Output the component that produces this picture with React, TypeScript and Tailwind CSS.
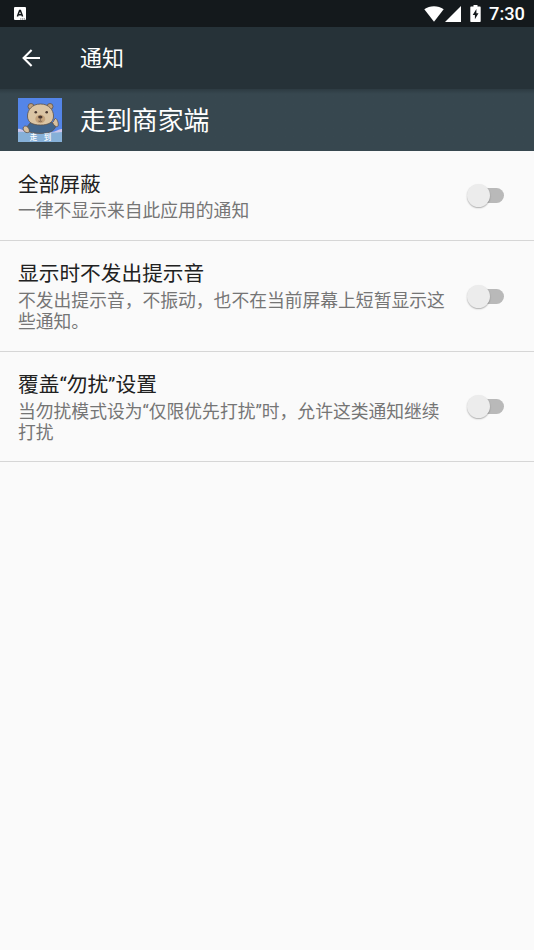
import { useState } from "react";

interface Setting {
  id: string;
  title: string;
  summary: string[];
}

const SETTINGS: Setting[] = [
  { id: "block", title: "全部屏蔽", summary: ["一律不显示来自此应用的通知"] },
  {
    id: "silent",
    title: "显示时不发出提示音",
    summary: ["不发出提示音，不振动，也不在当前屏幕上短暂显示这", "些通知。"],
  },
  {
    id: "override",
    title: "覆盖“勿扰”设置",
    summary: ["当勿扰模式设为“仅限优先打扰”时，允许这类通知继续", "打扰"],
  },
];

export default function App() {
  return (
    <div className="flex min-h-screen flex-col bg-[#fafafa] font-[Roboto,'Noto_Sans_CJK_SC',sans-serif]">
      <StatusBar />
      <header className="flex h-[62px] items-center bg-[#263238] text-white">
        <button aria-label="返回" className="ml-[19px] h-6 w-6">
          <svg viewBox="0 0 24 24" className="h-6 w-6" fill="none" stroke="currentColor" strokeWidth="2.1">
            <path d="M21 12H4.5M12.6 4 4.6 12l8 8" />
          </svg>
        </button>
        <h1 className="ml-[37px] pt-0.5 text-[22px] leading-[30px]">通知</h1>
      </header>
      <div className="flex h-[62px] items-center bg-[#37474f] bg-linear-to-b from-[#2d3b42] from-0% to-[#37474f] to-[5px] pl-[18px] text-white">
        <AppIcon />
        <h2 className="ml-[18px] pt-0.5 text-[25.9px] leading-[36px]">走到商家端</h2>
      </div>
      <main>
        {SETTINGS.map((setting) => (
          <SettingRow key={setting.id} setting={setting} />
        ))}
      </main>
    </div>
  );
}

function StatusBar() {
  return (
    <div className="flex h-[27px] items-center justify-between bg-[#14191c] pr-[9px] pl-[14px] text-white">
      <div className="h-[13px] w-3 rounded-[1px] bg-white">
        <svg viewBox="0 0 12 13" className="h-[13px] w-3">
          <path d="M3.4 9.6 5.6 3.6h.8l2.2 6M4.4 7.7h3.2" fill="none" stroke="#14191c" strokeWidth="1.5" />
          <path d="M6.2 12h1.2m.6 0h1.2m.6 0H11" stroke="#14191c" strokeWidth=".7" />
        </svg>
      </div>
      <div className="flex items-center">
        <svg viewBox="0 0 20 16" className="h-4 w-5" fill="currentColor">
          <path d="M.3 3.2C5.7-.7 14.3-.7 19.7 3.2L10 15.8z" />
        </svg>
        <svg viewBox="0 0 16 16" className="ml-[1px] h-4 w-4" fill="currentColor">
          <path d="M16 0v16H0z" />
        </svg>
        <svg viewBox="0 0 11 17" className="ml-[9px] h-[17px] w-[11px]" fill="currentColor">
          <path fillRule="evenodd" d="M3.5 0h4v1.6H10q.7 0 .7.8v13.8q0 .8-.7.8H1q-.7 0-.7-.8V2.4q0-.8.7-.8h2.5zM6.4 4 2.7 10h2.2v4.3L8.5 8.3H6.4z" />
        </svg>
        <span className="ml-2 text-[18.3px] leading-[26px] font-medium">7:30</span>
      </div>
    </div>
  );
}

function AppIcon() {
  return (
    <svg viewBox="0 0 44 44" className="h-11 w-11">
      <path fill="#5485e8" d="M0 0h44v44H0z" />
      <path fill="#cfc6ea" d="M0 31c3-1 5 2 9 3h25c4 0 6-3 10-3v13H0z" />
      <path fill="#86b0d8" d="M0 34c9-1 16 2 24 1s13 0 20-1v10H0z" />
      <g stroke="#5c5047" strokeWidth=".8">
        <path fill="#416489" d="M9 33c-1-5 3-9 8-10h14c3 1 5 4 7 4 0 3-3 6-6 7-5 2-17 2-23-1z" />
        <path fill="#d8c1a0" d="M10.5 34.5C7 35.5 4 31.5 5.5 29c1.5-2 4.5-.5 5.500 2 .6 1.5.5 3-.5 3.500zM34.5 24.500c1.5-.5 1.5-4 3-4s3.5 5 2.500 7.500c-1 2-4 0-5.500-3.500z" />
        <circle cx="13" cy="8.5" r="3" fill="#c2a17c" />
        <circle cx="32" cy="8.5" r="3" fill="#c2a17c" />
        <path fill="#dbc5a4" d="M22.5 6C14 6 9.5 12 9.5 18c0 6.5 5 9 13 9s13-2.5 13-9c0-6-4.5-12-13-12z" />
      </g>
      <ellipse cx="22.3" cy="21" rx="5" ry="4.2" fill="#c6a57e" />
      <ellipse cx="22.3" cy="19" rx="2.2" ry="1.6" fill="#49372f" />
      <path d="M22.3 20v3m-2 0q2 1.5 4 0" fill="none" stroke="#6a5140" strokeWidth=".7" />
      <circle cx="17.8" cy="14.2" r="1.3" fill="#49372f" />
      <circle cx="28.7" cy="14.2" r="1.3" fill="#49372f" />
      <text x="11.8" y="41.8" fontSize="7.5" fontWeight="500" fill="#fff">走</text>
      <text x="25.8" y="41.8" fontSize="7.5" fontWeight="500" fill="#fff">到</text>
    </svg>
  );
}

function SettingRow({ setting }: { setting: Setting }) {
  const [on, setOn] = useState(false);

  return (
    <section className="flex items-center justify-between border-b border-[#d6d6d6] pr-[30px] pl-[18px]">
      <div className="pt-[20.6px] pb-[18.6px] whitespace-nowrap">
        <h3 className="text-[20.7px] leading-[27px] text-[#212121]">{setting.title}</h3>
        <p className="mt-[1.6px] text-[17.8px] leading-[21px] text-[#757575]">
          {setting.summary.map((line) => (
            <span key={line} className="block">{line}</span>
          ))}
        </p>
      </div>
      <Toggle label={setting.title} on={on} onToggle={() => setOn(!on)} />
    </section>
  );
}

function Toggle({ label, on, onToggle }: { label: string; on: boolean; onToggle: () => void }) {
  return (
    <button
      role="switch"
      aria-checked={on}
      aria-label={label}
      onClick={onToggle}
      className="relative mt-px h-[15px] w-8 shrink-0 rounded-full bg-[#b9b9b9]"
    >
      <span
        className={`absolute -top-1 h-[23px] w-[23px] rounded-full shadow-[0_1px_1.5px_rgba(0,0,0,0.3)] ${
          on ? "left-[15px] bg-[#009688]" : "-left-[5.5px] bg-[#ececec]"
        }`}
      />
    </button>
  );
}
